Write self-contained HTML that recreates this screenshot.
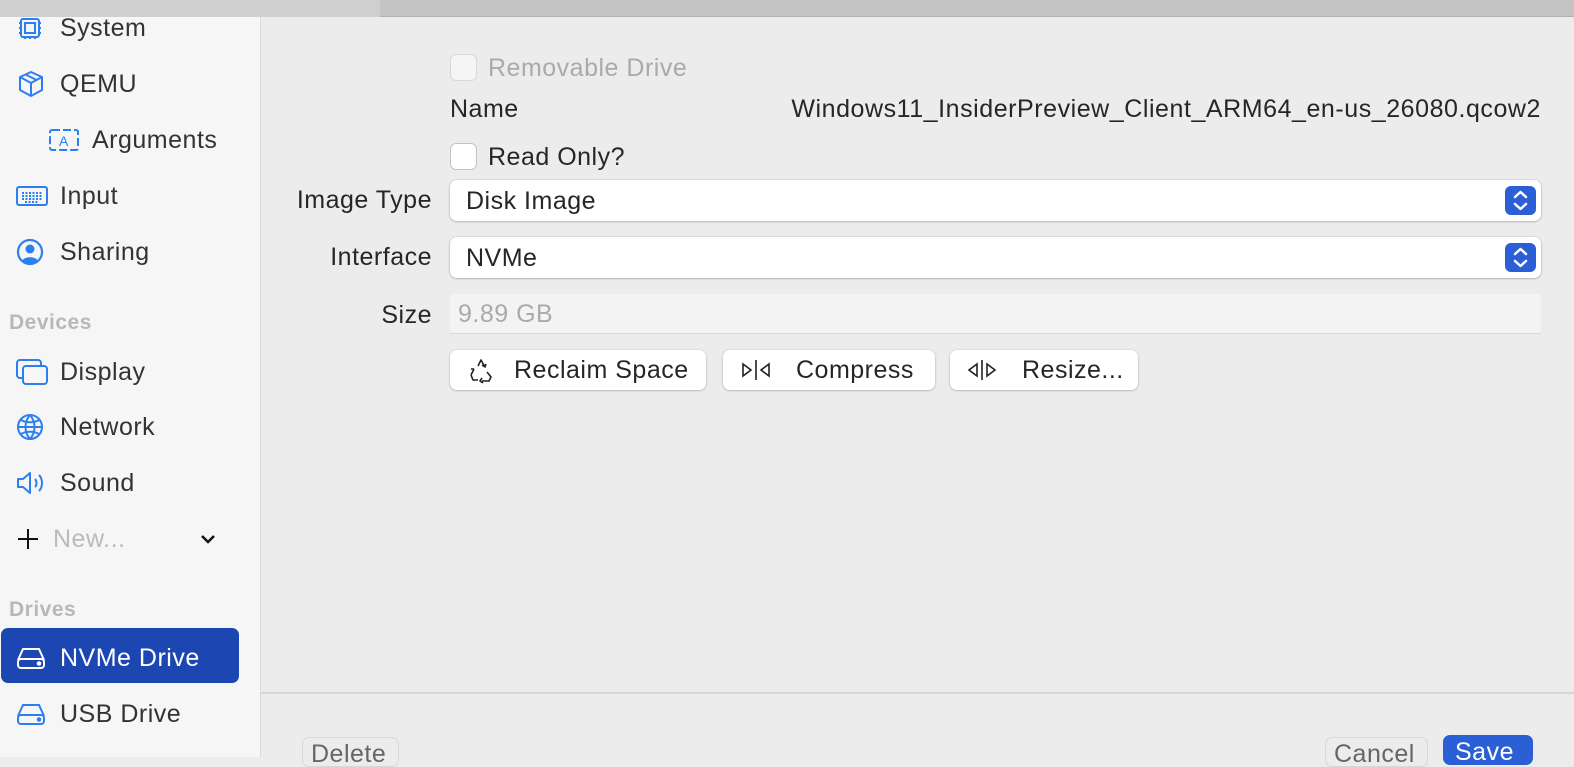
<!DOCTYPE html>
<html><head><meta charset="utf-8"><style>
*{margin:0;padding:0;box-sizing:border-box}
body{width:1574px;height:752px;overflow:hidden;background:#ececec;font-family:"Liberation Sans",sans-serif;position:relative;color:#262626;letter-spacing:.5px}
.top{position:absolute;left:0;top:0;width:1574px;height:17px;background:#c4c4c4;border-bottom:1px solid #b0b0b0}
.top .l{position:absolute;left:0;top:0;width:380px;height:17px;background:#cfcfcf}
.side{position:absolute;left:0;top:17px;width:261px;height:740px;background:#f6f6f6;border-right:1px solid #dcdcdc}
.it{position:absolute;left:0;height:40px;display:flex;align-items:center;font-size:25px;color:#333}
.it svg{position:absolute;left:16px}
.it span{position:absolute;left:60px;white-space:nowrap}
.hd{position:absolute;left:9px;font-size:21px;font-weight:bold;color:#b8b8b8}
.sel{position:absolute;left:1px;top:628px;width:238px;height:55px;background:#1c47b3;border-radius:7px}
.lbl{position:absolute;font-size:25px;color:#262626;text-align:right;width:240px;left:192px}
.pop{position:absolute;left:450px;width:1091px;height:41px;background:#fff;border-radius:7px;box-shadow:0 0.5px 2px rgba(0,0,0,.35);font-size:25px;padding:7px 16px}
.pop .ar{position:absolute;right:5px;top:6px;width:31px;height:29px;background:#2a5fd6;border-radius:6px}
.btn{position:absolute;top:350px;height:40px;background:#fff;border-radius:7px;box-shadow:0 0.5px 2px rgba(0,0,0,.3);font-size:25px;padding:6px 0}
.cb{position:absolute;left:450px;width:27px;height:27px;border:1px solid #c4c4c4;border-radius:6px;background:#fff}
</style></head><body>
<div class="top"><div class="l"></div></div>
<div class="side"></div>
<div class="sel"></div>
<div class="it" style="top:8px"><svg width="28" height="28" viewBox="0 0 28 28" fill="none" stroke="#2d7ff0" stroke-width="2"><rect x="5" y="5" width="18" height="18" rx="2"/><rect x="9" y="9" width="10" height="10"/><path d="M3 9h2M3 14h2M3 19h2M23 9h2M23 14h2M23 19h2M9 23v2M14 23v2M19 23v2"/></svg><span>System</span></div>
<div class="it" style="top:64px"><svg width="30" height="30" viewBox="0 0 30 30" fill="none" stroke="#2d7ff0" stroke-width="2" stroke-linejoin="round"><path d="M15 3l11 5v13l-11 6-11-6V8z M4 8l11 6 11-6 M15 14v13 M9.5 5.5l11 5.5"/></svg><span>QEMU</span></div>
<div class="it" style="top:120px"><svg style="left:48px" width="32" height="24" viewBox="0 0 32 24" fill="none" stroke="#2d7ff0" stroke-width="2"><rect x="2" y="2" width="28" height="20" rx="2" stroke-dasharray="8 3"/><text x="11" y="18" font-size="14" fill="#2d7ff0" stroke="none" font-family="Liberation Sans">A</text></svg><span style="left:92px">Arguments</span></div>
<div class="it" style="top:176px"><svg width="32" height="22" viewBox="0 0 32 22" fill="none" stroke="#2d7ff0" stroke-width="2"><rect x="1" y="2" width="30" height="18" rx="2"/><path d="M6 8h20M6 11h20M6 14h20M9 17h14" stroke-dasharray="2 1.5"/></svg><span>Input</span></div>
<div class="it" style="top:232px"><svg width="28" height="28" viewBox="0 0 28 28"><circle cx="14" cy="14" r="12" fill="none" stroke="#2d7ff0" stroke-width="2.2"/><circle cx="14" cy="11" r="4.5" fill="#2d7ff0"/><path d="M6 23c2-5 14-5 16 0a12 12 0 0 1-16 0z" fill="#2d7ff0"/></svg><span>Sharing</span></div>
<div class="hd" style="top:311px">Devices</div>
<div class="it" style="top:352px"><svg width="32" height="28" viewBox="0 0 32 28" fill="none" stroke="#2d7ff0" stroke-width="2"><rect x="1" y="2" width="24" height="18" rx="3"/><rect x="7" y="8" width="24" height="18" rx="3" fill="#f6f6f6"/></svg><span>Display</span></div>
<div class="it" style="top:407px"><svg width="28" height="28" viewBox="0 0 28 28" fill="none" stroke="#2d7ff0" stroke-width="2"><circle cx="14" cy="14" r="12"/><path d="M2 14h24M14 2c-6 7-6 17 0 24M14 2c6 7 6 17 0 24M5 7c5 3 13 3 18 0M5 21c5-3 13-3 18 0"/></svg><span>Network</span></div>
<div class="it" style="top:463px"><svg width="30" height="28" viewBox="0 0 30 28" fill="none" stroke="#2d7ff0" stroke-width="2" stroke-linejoin="round"><path d="M2 10h5l7-6v20l-7-6H2z M19 10c2 2 2 6 0 8 M23 6c4 4 4 12 0 16"/></svg><span>Sound</span></div>
<div class="it" style="top:519px"><svg width="24" height="24" viewBox="0 0 24 24" stroke="#111" stroke-width="2"><path d="M12 2v20M2 12h20"/></svg><span style="left:53px;color:#bbb">New...</span><svg style="left:199px" width="18" height="12" viewBox="0 0 18 12" fill="none" stroke="#111" stroke-width="2.5"><path d="M3 3l6 6 6-6"/></svg></div>
<div class="hd" style="top:598px">Drives</div>
<div class="it" style="top:638px"><svg width="30" height="24" viewBox="0 0 30 24" fill="none" stroke="#fff" stroke-width="2"><path d="M2 14L7 3h16l5 11"/><rect x="2" y="13" width="26" height="9" rx="3"/><circle cx="23" cy="17.5" r="1.3" fill="#fff"/></svg><span style="color:#fff">NVMe Drive</span></div>
<div class="it" style="top:694px"><svg width="30" height="24" viewBox="0 0 30 24" fill="none" stroke="#2d7ff0" stroke-width="2"><path d="M2 14L7 3h16l5 11"/><rect x="2" y="13" width="26" height="9" rx="3"/><circle cx="23" cy="17.5" r="1.3" fill="#2d7ff0"/></svg><span>USB Drive</span></div>

<div class="cb" style="top:54px;opacity:.5"></div>
<div style="position:absolute;left:488px;top:54px;font-size:25px;color:#aaa">Removable Drive</div>
<div style="position:absolute;left:450px;top:95px;font-size:25px">Name</div>
<div style="position:absolute;right:33px;top:95px;font-size:25px;letter-spacing:.55px">Windows11_InsiderPreview_Client_ARM64_en-us_26080.qcow2</div>
<div class="cb" style="top:143px"></div>
<div style="position:absolute;left:488px;top:143px;font-size:25px">Read Only?</div>
<div class="lbl" style="top:186px">Image Type</div>
<div class="pop" style="top:180px">Disk Image<div class="ar"><svg width="31" height="29" viewBox="0 0 31 29" fill="none" stroke="#fff" stroke-width="2.5" stroke-linecap="round" stroke-linejoin="round"><path d="M10 11l5.5-5 5.5 5M10 18l5.5 5 5.5-5"/></svg></div></div>
<div class="lbl" style="top:243px">Interface</div>
<div class="pop" style="top:237px">NVMe<div class="ar"><svg width="31" height="29" viewBox="0 0 31 29" fill="none" stroke="#fff" stroke-width="2.5" stroke-linecap="round" stroke-linejoin="round"><path d="M10 11l5.5-5 5.5 5M10 18l5.5 5 5.5-5"/></svg></div></div>
<div class="lbl" style="top:301px">Size</div>
<div style="position:absolute;left:450px;top:294px;width:1091px;height:40px;background:#f3f3f3;border-bottom:1px solid #d8d8d8;font-size:25px;color:#aaa;padding:6px 8px">9.89 GB</div>

<div class="btn" style="left:450px;width:256px"><svg style="position:absolute;left:17px;top:7px" width="28" height="28" viewBox="0 0 28 28" fill="none" stroke="#222" stroke-width="1.6" stroke-linejoin="round"><path d="M11 9l3-6 4 7M15 8l3 2 1-3M4 18l3-6M7 12l-3 0M4 18l2 5h5M20 15l4 5-2 4h-7M15 21l-2 3 3 2"/></svg><span style="position:absolute;left:64px">Reclaim Space</span></div>
<div class="btn" style="left:723px;width:212px"><svg style="position:absolute;left:17px;top:9px" width="32" height="22" viewBox="0 0 32 22" fill="none" stroke="#222" stroke-width="1.6"><path d="M3 5l8 6-8 6z M16 1v20 M29 5l-8 6 8 6z"/></svg><span style="position:absolute;left:73px">Compress</span></div>
<div class="btn" style="left:950px;width:188px"><svg style="position:absolute;left:16px;top:9px" width="32" height="22" viewBox="0 0 32 22" fill="none" stroke="#222" stroke-width="1.6"><path d="M11 5l-8 6 8 6z M16 1v20 M21 5l8 6-8 6z"/></svg><span style="position:absolute;left:72px">Resize...</span></div>

<div style="position:absolute;left:261px;top:692px;width:1314px;height:2px;background:#d6d6d6"></div>
<div style="position:absolute;left:302px;top:737px;width:97px;height:30px;border:1px solid #d8d8d8;border-radius:7px;background:#ececec;font-size:25px;color:#666;padding:2px 8px;overflow:hidden">Delete</div>
<div style="position:absolute;left:1325px;top:737px;width:103px;height:30px;border:1px solid #d8d8d8;border-radius:7px;background:#ececec;font-size:25px;color:#666;padding:2px 8px;overflow:hidden">Cancel</div>
<div style="position:absolute;left:1443px;top:735px;width:90px;height:30px;border-radius:7px;background:#2a5fd6;font-size:25px;color:#fff;padding:3px 12px">Save</div>
</body></html>
